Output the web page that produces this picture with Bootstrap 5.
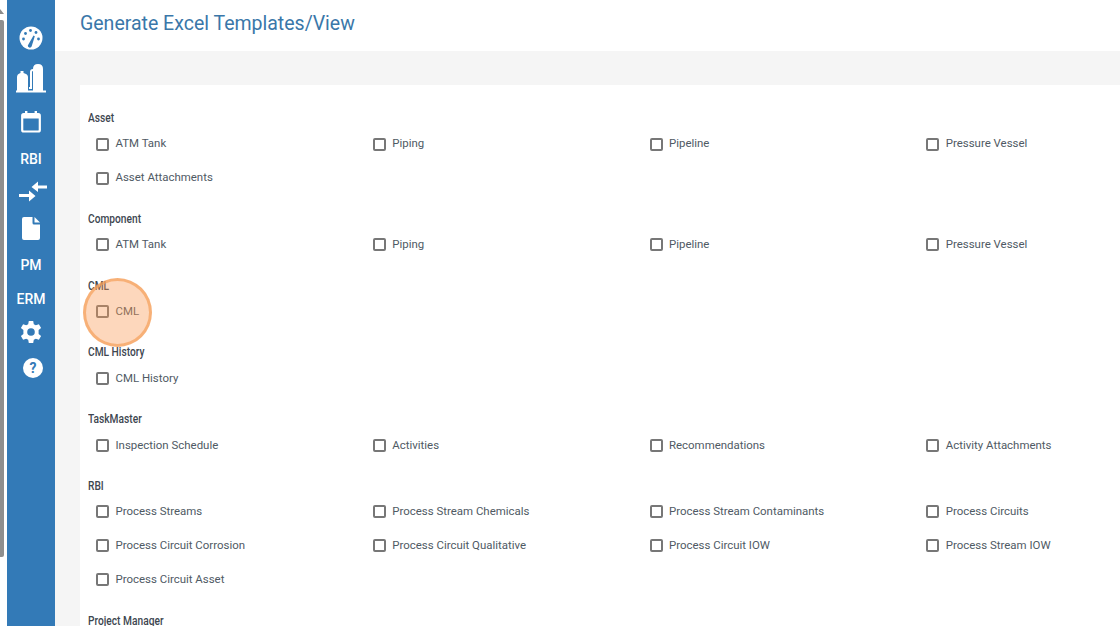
<!DOCTYPE html>
<html lang="en">
<head>
    <meta charset="UTF-8">
    <meta name="viewport" content="width=device-width, initial-scale=1.0">
    <title>Generate Excel Templates/View</title>
    <link href="https://cdn.jsdelivr.net/npm/bootstrap@5.3.0/dist/css/bootstrap.min.css" rel="stylesheet">
    <style>
        html, body {
            height: 626px;
            overflow: hidden;
        }
        body {
            background-color: #fff;
            font-family: Roboto, "Liberation Sans", sans-serif;
            color: #4a5560;
        }
        .page-wrap {
            height: 626px;
            width: 1120px;
            overflow: hidden;
        }
        .edge-strip {
            width: 7px;
            flex: none;
            background-color: #fff;
            padding-top: 9px;
        }
        .edge-arrow {
            width: 0;
            height: 0;
            border-bottom: 5px solid #8c8c8c;
            border-right: 4px solid transparent;
            margin-bottom: 6px;
        }
        .edge-thumb {
            width: 4px;
            height: 537px;
            background-color: #8f8f8f;
            border-radius: 0 2px 2px 0;
        }
        .side-rail {
            width: 48px;
            flex: none;
            background-color: #337ab7;
            padding-top: 18px;
        }
        .rail-item {
            color: #fff;
            font-size: 14px;
            font-weight: 500;
        }
        .rail-item:nth-child(1), .rail-item:nth-child(2), .rail-item:nth-child(5), .rail-item:nth-child(9) { height: 40px; }
        .rail-item:nth-child(3) { height: 48px; }
        .rail-item:nth-child(4), .rail-item:nth-child(8) { height: 26px; }
        .rail-item:nth-child(6), .rail-item:nth-child(10) { height: 32px; }
        .rail-item:nth-child(7) { height: 42px; }
        .main-area {
            width: 1065px;
            flex: none;
            background-color: #f5f5f5;
        }
        .title-bar {
            height: 51px;
            background-color: #fff;
            padding: 10px 0 0 25px;
        }
        .title-bar h1 {
            font-family: Roboto, "Liberation Sans", sans-serif;
            font-size: 19.5px;
            line-height: 28px;
            font-weight: 400;
            color: #3a77a9;
            margin: 0;
        }
        .form-panel {
            margin: 34px 0 0 25px;
            background-color: #fff;
            padding: 24px 0 0 8px;
            height: 541px;
            overflow: hidden;
        }
        .group-label {
            font-size: 12px;
            font-weight: 500;
            line-height: 18px;
            height: 18px;
            color: #3d4650;
            transform: scaleX(0.85);
            transform-origin: left center;
        }
        .group-block {
            margin-bottom: 14.8px;
        }
        .check-row {
            width: 1107px;
        }
        .check-cell {
            width: 25%;
            height: 34px;
            padding-left: 8px;
            font-size: 11.45px;
            color: #4f5a64;
        }
        .check-cell .box {
            width: 13px;
            height: 13px;
            border: 2px solid #777;
            border-radius: 2px;
            flex: none;
            margin-right: 6.5px;
        }
        .click-ring {
            position: absolute;
            left: 83px;
            top: 278px;
            width: 69px;
            height: 69px;
            border-radius: 50%;
            background-color: rgba(250, 150, 80, 0.38);
            border: 3px solid rgba(245, 160, 90, 0.7);
        }
    </style>
</head>
<body>
<div class="page-wrap d-flex position-relative">
    <div class="edge-strip"><div class="edge-arrow"></div><div class="edge-thumb"></div></div>

    <div class="side-rail d-flex flex-column">
        <div class="rail-item d-flex align-items-center justify-content-center">
            <svg width="24" height="24" viewBox="0 0 24 24"><circle cx="12" cy="12" r="11.5" fill="#fff"/><path d="M8.800 19.500 L14.500 9.500 L15.800 10.200 L12.600 20.500 a2 2 0 0 1 -3.800 -1 Z" fill="#337ab7"/><circle cx="4.500" cy="13" r="1.400" fill="#337ab7"/><circle cx="6.500" cy="7.500" r="1.400" fill="#337ab7"/><circle cx="11.500" cy="4.500" r="1.400" fill="#337ab7"/><circle cx="17" cy="6.500" r="1.400" fill="#337ab7"/><circle cx="19.500" cy="13" r="1.400" fill="#337ab7"/></svg>
        </div>
        <div class="rail-item d-flex align-items-center justify-content-center">
            <svg width="30" height="30" viewBox="0 0 30 30" fill="#fff"><rect x="0" y="27.500" width="30" height="2"/><path d="M1 28 V14 q0 -3 3.500 -4 V8 h3 v2 q4.500 1 4.500 4 V28 Z"/><path d="M17 28 V6 q0 -5 5 -5 T27 6 V28 Z"/><path d="M13 24 h1 V9 q0 -3 3 -3 v2 q-1 0 -1 1 V26 h-3 Z"/></svg>
        </div>
        <div class="rail-item d-flex align-items-center justify-content-center">
            <svg width="20" height="22" viewBox="0 0 20 22" fill="none"><rect x="1.200" y="3.200" width="17.600" height="17.300" rx="1.500" stroke="#fff" stroke-width="2.200"/><rect x="1" y="3" width="18" height="4.500" fill="#fff"/><rect x="4" y="0" width="2.400" height="4" fill="#fff"/><rect x="13.600" y="0" width="2.400" height="4" fill="#fff"/></svg>
        </div>
        <div class="rail-item d-flex align-items-center justify-content-center">RBI</div>
        <div class="rail-item d-flex align-items-center justify-content-center">
            <svg width="28" height="22" viewBox="0 0 28 22" fill="#fff" class="ms-1"><path d="M28 4.500 H19 V0.500 L12.500 6 L19 11 V7.500 H28 Z"/><path d="M0 13 H10 V9.500 L16.500 15 L10 20.500 V16 H0 Z"/></svg>
        </div>
        <div class="rail-item d-flex align-items-center justify-content-center">
            <svg width="18" height="23" viewBox="0 0 18 23" fill="#fff"><path d="M2 0 H10.500 V6 a1.500 1.500 0 0 0 1.500 1.500 H18 V21 a2 2 0 0 1 -2 2 H2 a2 2 0 0 1 -2 -2 V2 a2 2 0 0 1 2 -2 Z"/><path d="M12.500 0 L18 5.500 H12.500 Z"/></svg>
        </div>
        <div class="rail-item d-flex align-items-center justify-content-center">PM</div>
        <div class="rail-item d-flex align-items-center justify-content-center">ERM</div>
        <div class="rail-item d-flex align-items-center justify-content-center">
            <svg width="24" height="24" viewBox="0 0 24 24"><path fill="#fff" d="M14.200 1 L14.800 4.200 L16.800 5.300 L19.900 4.200 L22.100 8 L19.600 10.100 V13.900 L22.100 16 L19.900 19.800 L16.800 18.700 L14.800 19.800 L14.200 23 H9.800 L9.200 19.800 L7.200 18.700 L4.100 19.800 L1.900 16 L4.400 13.900 V10.100 L1.900 8 L4.100 4.200 L7.200 5.300 L9.200 4.200 L9.800 1 Z"/><circle cx="12" cy="12" r="3.800" fill="#337ab7"/></svg>
        </div>
        <div class="rail-item d-flex align-items-center justify-content-center">
            <svg width="20" height="20" viewBox="0 0 20 20" class="ms-1"><circle cx="10" cy="10" r="10" fill="#fff"/><text x="10" y="15" text-anchor="middle" font-family="Roboto, sans-serif" font-size="14" font-weight="700" fill="#337ab7">?</text></svg>
        </div>
    </div>

    <div class="main-area">
        <div class="title-bar"><h1>Generate Excel Templates/View</h1></div>
        <div class="form-panel">
            <div class="group-block">
                <div class="group-label">Asset</div>
                <div class="check-row d-flex flex-wrap">
                    <div class="check-cell d-flex align-items-center"><span class="box"></span>ATM Tank</div>
                    <div class="check-cell d-flex align-items-center"><span class="box"></span>Piping</div>
                    <div class="check-cell d-flex align-items-center"><span class="box"></span>Pipeline</div>
                    <div class="check-cell d-flex align-items-center"><span class="box"></span>Pressure Vessel</div>
                    <div class="check-cell d-flex align-items-center"><span class="box"></span>Asset Attachments</div>
                </div>
            </div>
            <div class="group-block">
                <div class="group-label">Component</div>
                <div class="check-row d-flex flex-wrap">
                    <div class="check-cell d-flex align-items-center"><span class="box"></span>ATM Tank</div>
                    <div class="check-cell d-flex align-items-center"><span class="box"></span>Piping</div>
                    <div class="check-cell d-flex align-items-center"><span class="box"></span>Pipeline</div>
                    <div class="check-cell d-flex align-items-center"><span class="box"></span>Pressure Vessel</div>
                </div>
            </div>
            <div class="group-block">
                <div class="group-label">CML</div>
                <div class="check-row d-flex flex-wrap">
                    <div class="check-cell d-flex align-items-center"><span class="box"></span>CML</div>
                </div>
            </div>
            <div class="group-block">
                <div class="group-label">CML History</div>
                <div class="check-row d-flex flex-wrap">
                    <div class="check-cell d-flex align-items-center"><span class="box"></span>CML History</div>
                </div>
            </div>
            <div class="group-block">
                <div class="group-label">TaskMaster</div>
                <div class="check-row d-flex flex-wrap">
                    <div class="check-cell d-flex align-items-center"><span class="box"></span>Inspection Schedule</div>
                    <div class="check-cell d-flex align-items-center"><span class="box"></span>Activities</div>
                    <div class="check-cell d-flex align-items-center"><span class="box"></span>Recommendations</div>
                    <div class="check-cell d-flex align-items-center"><span class="box"></span>Activity Attachments</div>
                </div>
            </div>
            <div class="group-block">
                <div class="group-label">RBI</div>
                <div class="check-row d-flex flex-wrap">
                    <div class="check-cell d-flex align-items-center"><span class="box"></span>Process Streams</div>
                    <div class="check-cell d-flex align-items-center"><span class="box"></span>Process Stream Chemicals</div>
                    <div class="check-cell d-flex align-items-center"><span class="box"></span>Process Stream Contaminants</div>
                    <div class="check-cell d-flex align-items-center"><span class="box"></span>Process Circuits</div>
                    <div class="check-cell d-flex align-items-center"><span class="box"></span>Process Circuit Corrosion</div>
                    <div class="check-cell d-flex align-items-center"><span class="box"></span>Process Circuit Qualitative</div>
                    <div class="check-cell d-flex align-items-center"><span class="box"></span>Process Circuit IOW</div>
                    <div class="check-cell d-flex align-items-center"><span class="box"></span>Process Stream IOW</div>
                    <div class="check-cell d-flex align-items-center"><span class="box"></span>Process Circuit Asset</div>
                </div>
            </div>
            <div class="group-block">
                <div class="group-label">Project Manager</div>
            </div>
        </div>
    </div>

    <div class="click-ring"></div>
</div>
<script src="https://cdn.jsdelivr.net/npm/bootstrap@5.3.0/dist/js/bootstrap.bundle.min.js"></script>
</body>
</html>
